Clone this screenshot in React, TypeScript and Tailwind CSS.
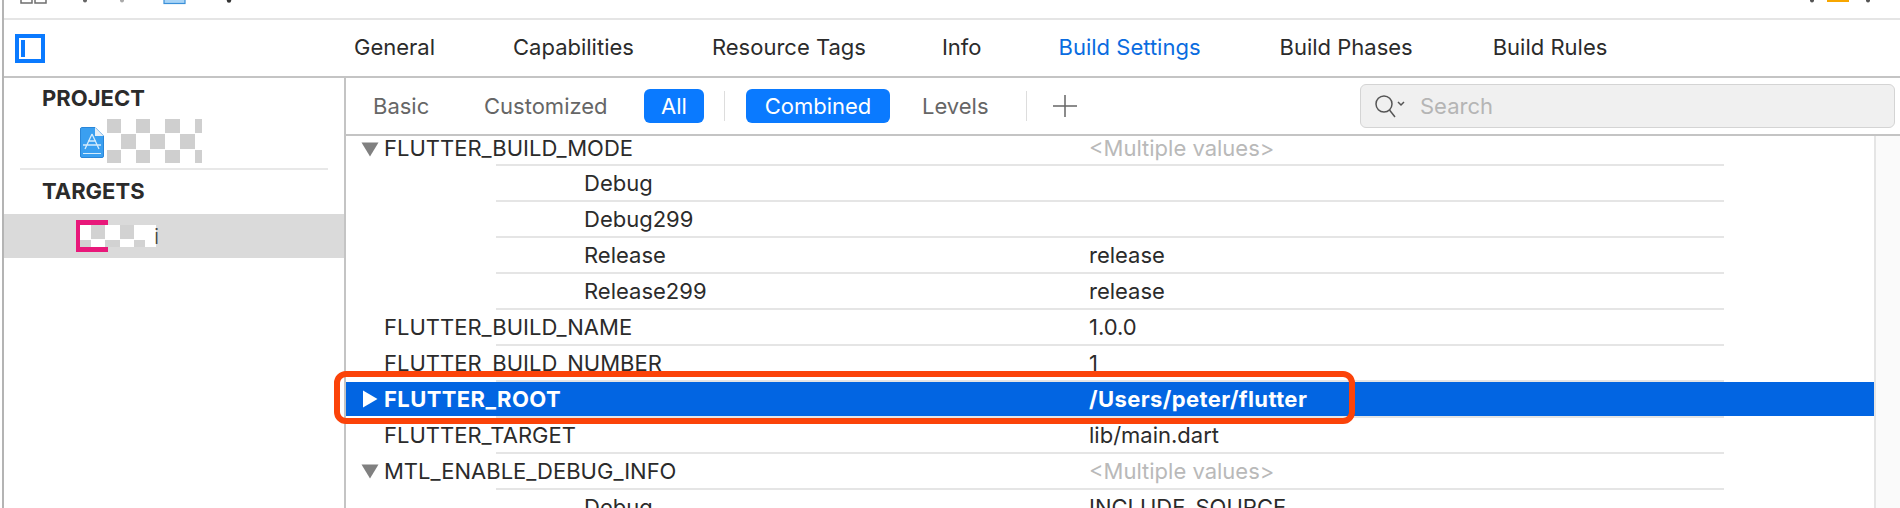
import React from "react";

const font = { fontFamily: "Inter, 'Liberation Sans', sans-serif" };

function Triangle({ open, white, first }: { open?: boolean; white?: boolean; first?: boolean }) {
  return open ? (
    <svg
      width="18"
      height="15"
      viewBox="0 0 18 15"
      className={`absolute left-[15px] ${first ? "top-[6px]" : "top-[10px]"}`}
    >
      <path d="M0.5 0.5 H17.5 L9 14.5 Z" fill="#808080" />
    </svg>
  ) : (
    <svg width="16" height="18" viewBox="0 0 16 18" className="absolute left-[16px] top-[8px]">
      <path d="M1 0.5 V17.5 L15.5 9 Z" fill={white ? "#ffffff" : "#808080"} />
    </svg>
  );
}

type RowProps = {
  name: string;
  value?: string;
  nested?: boolean;
  open?: boolean;
  selected?: boolean;
  muted?: boolean;
  first?: boolean;
};

function Row({ name, value, nested, open, selected, muted, first }: RowProps) {
  return (
    <div>
      <div
        className={`relative flex items-center ${first ? "h-[28px] pb-[4px]" : "h-[34px]"} ${
          selected ? "bg-[#0265e2] font-bold tracking-[0.4px] text-white" : "text-[#2b2b2b]"
        }`}
      >
        {open && <Triangle open first={first} />}
        {selected && <Triangle white />}
        <div className={`w-[743px] shrink-0 whitespace-nowrap ${nested ? "pl-[238px]" : "pl-[38px]"}`}>{name}</div>
        {value && <div className={muted ? "whitespace-nowrap text-[#b9b9b9]" : "whitespace-nowrap"}>{value}</div>}
      </div>
      <div className="ml-[150px] h-[2px] w-[1228px] bg-[#e5e5e5]" />
    </div>
  );
}

function Mosaic() {
  const cells: [number, number, number, number][] = [
    [0, 0, 14, 14], [29, 0, 14, 14], [58, 0, 15, 14], [88, 0, 7, 14],
    [14, 15, 15, 15], [43, 15, 15, 15], [73, 15, 15, 15],
    [0, 31, 14, 13], [29, 31, 14, 13], [58, 31, 15, 13], [88, 31, 7, 13],
  ];
  return (
    <svg width="96" height="45" viewBox="0 0 96 45">
      {cells.map(([x, y, w, h], i) => (
        <rect key={i} x={x} y={y} width={w} height={h} fill="#cfcfcf" />
      ))}
    </svg>
  );
}

function AppIcon() {
  return (
    <svg width="24" height="31" viewBox="0 0 24 31">
      <path d="M1.5 0.5 H15 L23.5 9 V29 a1.5 1.5 0 0 1 -1.5 1.5 H2 a1.5 1.5 0 0 1 -1.5 -1.5 V2 a1.5 1.5 0 0 1 1 -1.5 Z" fill="#3a9ff0" stroke="#2a86d8" />
      <path d="M15 0.5 V9 H23.5 Z" fill="#e6eef6" />
      <path d="M12 7 L5 22 M12 7 L19 22 M3 18 H21 M8 14 H16" stroke="#d5ecfc" strokeWidth="1.3" fill="none" />
      <path d="M3 26.5 H21" stroke="#d5ecfc" strokeWidth="1" />
    </svg>
  );
}

function TargetIcon() {
  return (
    <svg width="80" height="32" viewBox="0 0 80 32">
      <rect x="0" y="0" width="32" height="32" fill="#e8187a" />
      <rect x="4" y="5" width="76" height="22" fill="#ffffff" />
      <rect x="15" y="5" width="14" height="14" fill="#d2d2d2" />
      <rect x="44" y="5" width="14" height="14" fill="#d2d2d2" />
      <rect x="4" y="20" width="11" height="7" fill="#d2d2d2" />
      <rect x="29" y="20" width="15" height="7" fill="#d2d2d2" />
      <rect x="58" y="20" width="11" height="7" fill="#d2d2d2" />
    </svg>
  );
}

export default function App() {
  return (
    <div
      className="flex h-[508px] w-[1900px] overflow-hidden bg-white pl-[2px] text-[22px] leading-none text-[#2b2b2b]"
      style={font}
    >
      <div className="flex min-w-0 flex-1 flex-col border-l-2 border-[#b4b4b4]">
        {/* clipped window toolbar */}
        <div className="flex h-[18px] shrink-0 items-start justify-between">
          <svg width="240" height="6" viewBox="0 0 240 6" className="ml-[16px]">
            <path d="M1 0 V3 H12 V0 M15 0 V3 H26 V0" stroke="#6f6f6f" strokeWidth="1.5" fill="none" />
            <circle cx="65" cy="0.5" r="2" fill="#666" />
            <circle cx="102" cy="0.5" r="2" fill="#aaa" />
            <rect x="144" y="-3" width="21" height="6.5" fill="#a8d4f7" stroke="#3a8fd8" strokeWidth="1.2" />
            <circle cx="209" cy="0.5" r="2.2" fill="#333" />
          </svg>
          <svg width="70" height="6" viewBox="0 0 70 6" className="mr-[20px]">
            <circle cx="2" cy="0.5" r="2" fill="#555" />
            <rect x="17" y="-3" width="22" height="5" fill="#f7a600" />
            <circle cx="58" cy="0.5" r="2" fill="#555" />
          </svg>
        </div>
        <div className="h-[2px] shrink-0 bg-[#e5e5e5]" />

        {/* tab bar */}
        <div className="flex h-[56px] shrink-0 items-center">
          <svg width="30" height="30" viewBox="0 0 30 30" className="ml-[11px]">
            <rect x="2" y="3" width="26" height="25" fill="none" stroke="#0a7aff" strokeWidth="4" />
            <rect x="6" y="7" width="4" height="17" fill="#0a7aff" />
          </svg>
          <div className="mb-[2px] ml-[309px] flex gap-[78px]">
            <span>General</span>
            <span>Capabilities</span>
            <span>Resource Tags</span>
            <span className="ml-[-2px]">Info</span>
            <span className="ml-[-1px] text-[#0a6ce0]">Build Settings</span>
            <span className="ml-[1px]">Build Phases</span>
            <span className="ml-[2px]">Build Rules</span>
          </div>
        </div>
        <div className="h-[2px] shrink-0 bg-[#c4c4c4]" />

        <div className="flex min-h-0 flex-1">
          {/* sidebar */}
          <div className="w-[340px] shrink-0">
            <div className="pl-[38px] pt-[12px] font-bold leading-[16px] text-[#2b2b2b]">PROJECT</div>
            <div className="flex h-[58px] items-end pl-[76px] pt-[13px]">
              <div className="mb-[6px] mr-[3px]">
                <AppIcon />
              </div>
              <Mosaic />
            </div>
            <div className="ml-[16px] mt-[4px] h-[2px] w-[308px] bg-[#e8e8e8]" />
            <div className="pl-[38px] pt-[13px] font-bold leading-[16px] text-[#2b2b2b]">TARGETS</div>
            <div className="mt-[15px] flex h-[44px] items-center bg-[#dadada] pl-[72px]">
              <TargetIcon />
              <span className="ml-[-2px] font-light text-[#444]">i</span>
            </div>
          </div>
          <div className="w-[2px] shrink-0 bg-[#c4c4c4]" />

          <div className="flex min-w-0 flex-1 flex-col">
            {/* filter bar */}
            <div className="flex h-[56px] shrink-0 items-center text-[#666666]">
              <span className="ml-[27px] w-[56px]">Basic</span>
              <span className="ml-[55px] w-[124px] whitespace-nowrap">Customized</span>
              <span className="ml-[36px] flex h-[34px] w-[60px] items-center justify-center rounded-[6px] bg-[#0a7aff] text-white">All</span>
              <div className="ml-[20px] h-[30px] w-[1px] bg-[#dddddd]" />
              <span className="ml-[21px] flex h-[34px] w-[144px] items-center justify-center rounded-[6px] bg-[#0a7aff] text-white">Combined</span>
              <span className="ml-[32px] w-[66px]">Levels</span>
              <div className="ml-[38px] h-[30px] w-[1px] bg-[#dddddd]" />
              <svg width="24" height="22" viewBox="0 0 24 22" className="ml-[26px]">
                <path d="M12 0 V22 M0 11 H24" stroke="#666" strokeWidth="1.5" />
              </svg>
              <div className="ml-[283px] flex h-[44px] w-[535px] items-center rounded-[6px] border border-[#d4d4d4] bg-[#f0f0f0] pl-[13px] text-[#b5b5b5]">
                <svg width="34" height="26" viewBox="0 0 34 26" className="shrink-0">
                  <circle cx="10" cy="11" r="8" fill="none" stroke="#555" strokeWidth="1.5" />
                  <path d="M15.5 17 L21 24" stroke="#555" strokeWidth="1.5" />
                  <path d="M24 9 L27 12 L30 9" fill="none" stroke="#555" strokeWidth="1.5" />
                </svg>
                <span className="ml-[12px]">Search</span>
              </div>
            </div>
            <div className="h-[2px] shrink-0 bg-[#c4c4c4]" />

            {/* settings table */}
            <div className="flex min-h-0 flex-1">
              <div className="w-[1528px] shrink-0">
                <Row first open name="FLUTTER_BUILD_MODE" value="<Multiple values>" muted />
                <Row nested name="Debug" />
                <Row nested name="Debug299" />
                <Row nested name="Release" value="release" />
                <Row nested name="Release299" value="release" />
                <Row name="FLUTTER_BUILD_NAME" value="1.0.0" />
                <Row name="FLUTTER_BUILD_NUMBER" value="1" />
                <Row selected name="FLUTTER_ROOT" value="/Users/peter/flutter" />
                <Row name="FLUTTER_TARGET" value="lib/main.dart" />
                <Row open name="MTL_ENABLE_DEBUG_INFO" value="<Multiple values>" muted />
                <Row nested name="Debug" value="INCLUDE_SOURCE" />
              </div>
              <div className="flex-1 border-l-2 border-[#e5e5e5] bg-[#fafafa]" />
            </div>
          </div>
        </div>
      </div>

      {/* annotation drawn over the selected row */}
      <div className="pointer-events-none absolute left-[334px] top-[371px] h-[53px] w-[1021px] rounded-[12px] border-[6px] border-[#fb4309]" />
    </div>
  );
}
